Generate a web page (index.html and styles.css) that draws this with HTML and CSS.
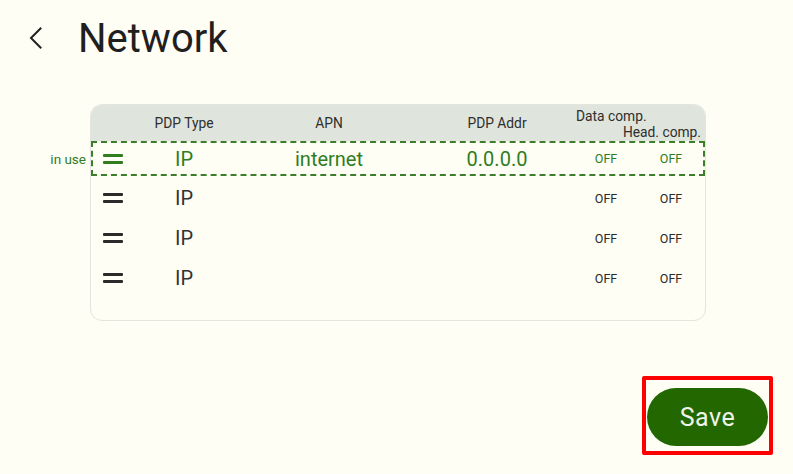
FILE: index.html
```html
<!DOCTYPE html>
<html lang="en">
<head>
<meta charset="utf-8">
<title>Network</title>
<link rel="stylesheet" href="styles.css">
</head>
<body>
<div class="page">
  <header class="topbar">
    <button class="back" aria-label="Back">
      <svg width="14" height="22" viewBox="0 0 14 22"><polyline points="11.5,1.5 2,11 11.5,20.5" fill="none" stroke="#222" stroke-width="2" stroke-linecap="square"/></svg>
    </button>
    <h1 class="title">Network</h1>
  </header>

  <section class="card">
    <div class="thead">
      <div class="cell"></div>
      <div class="cell">PDP Type</div>
      <div class="cell">APN</div>
      <div class="cell">PDP Addr</div>
      <div class="comp">
        <div class="comp-data">Data comp.</div>
        <div class="comp-head">Head. comp.</div>
      </div>
    </div>

    <div class="row row-active">
      <span class="in-use">in use</span>
      <div class="cell handle"><span></span><span></span></div>
      <div class="cell big">IP</div>
      <div class="cell big">internet</div>
      <div class="cell big">0.0.0.0</div>
      <div class="cell small">OFF</div>
      <div class="cell small">OFF</div>
    </div>
    <div class="row">
      <div class="cell handle"><span></span><span></span></div>
      <div class="cell big">IP</div>
      <div class="cell big"></div>
      <div class="cell big"></div>
      <div class="cell small">OFF</div>
      <div class="cell small">OFF</div>
    </div>
    <div class="row">
      <div class="cell handle"><span></span><span></span></div>
      <div class="cell big">IP</div>
      <div class="cell big"></div>
      <div class="cell big"></div>
      <div class="cell small">OFF</div>
      <div class="cell small">OFF</div>
    </div>
    <div class="row">
      <div class="cell handle"><span></span><span></span></div>
      <div class="cell big">IP</div>
      <div class="cell big"></div>
      <div class="cell big"></div>
      <div class="cell small">OFF</div>
      <div class="cell small">OFF</div>
    </div>
  </section>

  <footer class="actions">
    <div class="highlight">
      <button class="save">Save</button>
    </div>
  </footer>
</div>
</body>
</html>
```

FILE: styles.css
```css
* { box-sizing: border-box; }
html, body {
  margin: 0;
  padding: 0;
  background: #fefef5;
  font-family: Roboto, "Noto Sans", "Liberation Sans", sans-serif;
  color: #222;
}
.page {
  width: 793px;
  height: 474px;
  display: flex;
  flex-direction: column;
}
.topbar {
  height: 76px;
  display: flex;
  align-items: center;
  padding-left: 29px;
}
.back {
  border: 0;
  background: none;
  padding: 0;
  width: 14px;
  height: 22px;
  display: flex;
}
.title {
  margin: 0 0 0 35px;
  font-size: 40px;
  font-weight: 400;
  color: #1f201e;
  letter-spacing: 0;
}
.card {
  margin: 28px 0 0 90px;
  width: 616px;
  height: 217px;
  border: 1px solid #e3e5de;
  border-radius: 12px;
  position: relative;
}
.thead, .row {
  display: grid;
  grid-template-columns: 49px 88px 202px 134px 84px 46px 11px;
}
.thead {
  height: 36px;
  background: #dfe4dc;
  border-radius: 11px 11px 0 0;
  font-size: 13.8px;
  color: #2e2e2e;
  align-items: center;
}
.cell {
  display: flex;
  justify-content: center;
  align-items: center;
  white-space: nowrap;
}
.comp {
  grid-column: 5 / span 3;
  display: flex;
  flex-direction: column;
  line-height: 16px;
  padding-top: 2px;
}
.comp-data { padding-left: 12px; }
.comp-head { text-align: right; padding-right: 4px; }
.row {
  height: 40px;
  align-items: center;
  position: relative;
}
.row-active {
  height: 35px;
  margin-bottom: 2px;
  border: 2px dashed #3c7f2a;
  grid-template-columns: 47px 88px 202px 134px 84px 46px 9px;
}
.big { font-size: 20px; color: #333; }
.row-active .big { color: #2f7d1f; }
.small { font-size: 12.5px; color: #2a2a2a; }
.row-active .small { color: #2f7d1f; }
.handle {
  flex-direction: column;
  justify-content: center;
  align-items: flex-start;
  padding-left: 12px;
  gap: 4px;
}
.handle span {
  width: 20px;
  height: 3px;
  border-radius: 1px;
  background: #2b2b2b;
}
.row-active .handle span { background: #2f7d1f; }
.row-active .handle { padding-left: 10px; }
.in-use {
  position: absolute;
  right: calc(100% + 7px);
  top: 50%;
  transform: translateY(-50%);
  font-size: 13.5px;
  color: #2f7d1f;
  white-space: nowrap;
}
.actions {
  display: flex;
  justify-content: flex-end;
  padding-right: 20px;
  margin-top: 55px;
}
.highlight {
  border: 4px solid #ff0000;
  border-radius: 2px;
  padding: 8px 1px 5px 1px;
}
.save {
  width: 121px;
  height: 58px;
  border: 0;
  border-radius: 29px;
  background: #236700;
  color: #eef4ea;
  font-family: Roboto, "Noto Sans", sans-serif;
  font-size: 25px;
  letter-spacing: 0.5px;
  display: block;
}
```
